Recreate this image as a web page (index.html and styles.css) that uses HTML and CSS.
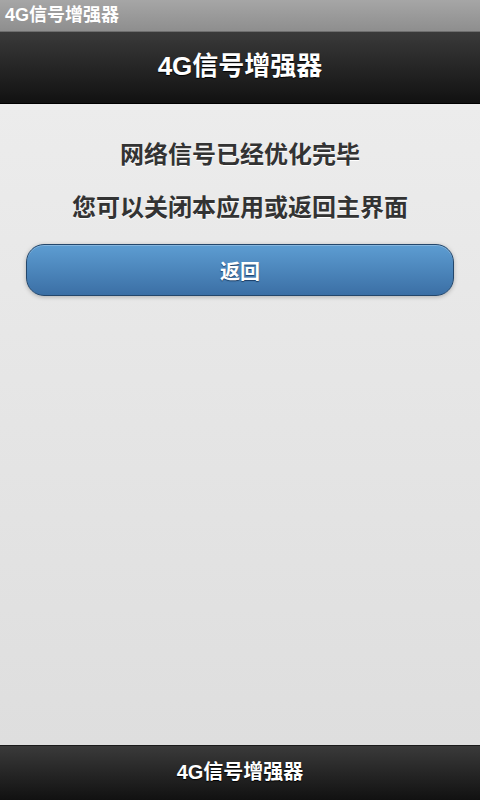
FILE: index.html
```html
<!DOCTYPE html>
<html lang="zh-CN">
<head>
<meta charset="utf-8">
<title>4G信号增强器</title>
<link rel="stylesheet" href="styles.css">
</head>
<body>
<div class="app">
  <div class="status-bar">4G信号增强器</div>
  <header class="header">4G信号增强器</header>
  <main class="content">
    <p class="msg">网络信号已经优化完毕</p>
    <p class="msg">您可以关闭本应用或返回主界面</p>
    <button class="btn" type="button">返回</button>
  </main>
  <footer class="footer">4G信号增强器</footer>
</div>
</body>
</html>
```
FILE: styles.css
```css
html, body {
  margin: 0;
  padding: 0;
  height: 100%;
}
body {
  font-family: "Liberation Sans", "Noto Sans CJK SC", sans-serif;
}
.app {
  height: 800px;
  display: flex;
  flex-direction: column;
}
.status-bar {
  height: 32px;
  box-sizing: border-box;
  background: linear-gradient(#a6a6a6, #8e8e8e);
  border-bottom: 1px solid #6e6e6e;
  color: #fff;
  font-size: 18px;
  font-weight: bold;
  line-height: 31px;
  padding-left: 5px;
}
.header {
  height: 72px;
  box-sizing: border-box;
  background: linear-gradient(#3a3a3a, #111111);
  border-bottom: 1px solid #000;
  color: #fff;
  font-size: 26px;
  font-weight: bold;
  text-align: center;
  line-height: 68px;
  text-shadow: 0 1px 1px #000;
}
.content {
  flex: 1;
  background: linear-gradient(#ececec, #dedede);
  display: flex;
  flex-direction: column;
  align-items: stretch;
  padding: 34px 26px 0;
}
.msg {
  margin: 0 0 20px;
  text-align: center;
  color: #333;
  font-size: 24px;
  font-weight: bold;
  line-height: 33px;
  text-shadow: 0 1px 0 #fff;
}
.btn {
  height: 52px;
  border: 1px solid #24476b;
  border-radius: 18px;
  background: linear-gradient(#5d9dd2, #3b6fa5);
  box-shadow: 0 1px 4px rgba(0,0,0,0.25), inset 0 1px 0 rgba(255,255,255,0.25);
  color: #fff;
  font-family: "Liberation Sans", "Noto Sans CJK SC", sans-serif;
  font-size: 20px;
  font-weight: bold;
  text-shadow: 0 1px 1px #1d3f66;
  padding: 0;
}
.footer {
  height: 55px;
  box-sizing: border-box;
  background: linear-gradient(#3a3a3a, #111111);
  border-top: 1px solid #1a1a1a;
  color: #fff;
  font-size: 20px;
  font-weight: bold;
  text-align: center;
  line-height: 52px;
  text-shadow: 0 1px 1px #000;
}
```
